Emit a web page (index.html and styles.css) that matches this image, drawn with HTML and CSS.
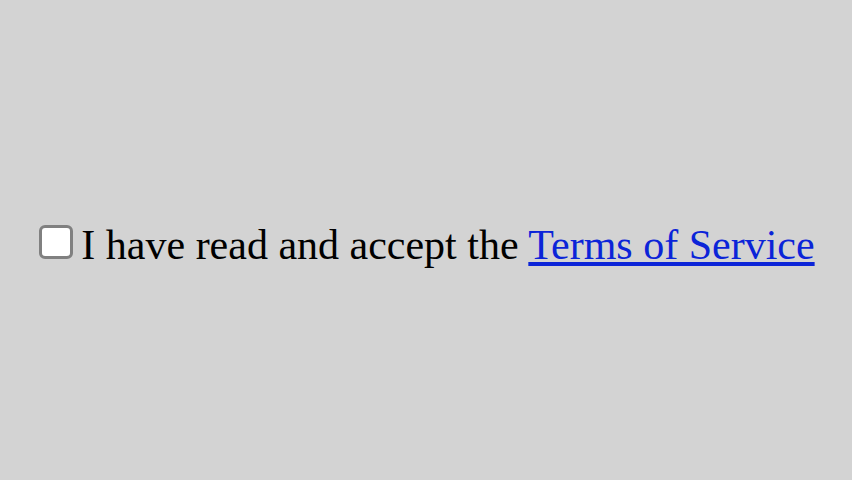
FILE: index.html
```html
<!DOCTYPE html>
<html lang="en">
<head>
    <meta charset="UTF-8">
    <meta name="viewport" content="width=device-width, initial-scale=1.0">
    <title>Terms of Service</title>
    <link rel="stylesheet" href="styles.css">
</head>
<body>
    <form class="consent">
        <input class="consent-box" type="checkbox" id="accept-terms" name="accept-terms">
        <label class="consent-label" for="accept-terms">I have read and accept the <a class="consent-link" href="#terms">Terms of Service</a></label>
    </form>
</body>
</html>
```

FILE: styles.css
```css
body {
    box-sizing: border-box;
    margin: 0;
    padding: 10px 0 0 2px;
    min-height: 100vh;
    display: flex;
    align-items: center;
    justify-content: center;
    background-color: #d3d3d3;
    font-family: "Liberation Serif", "Times New Roman", serif;
    font-size: 42px;
    line-height: 48px;
    color: #000;
}
.consent {
    display: flex;
    align-items: baseline;
    gap: 8px;
}
.consent-box {
    appearance: none;
    box-sizing: border-box;
    flex: none;
    width: 34px;
    height: 34px;
    margin: 0;
    background-color: #fff;
    border: 3px solid #808080;
    border-radius: 6px;
}
.consent-box:checked {
    background-color: #0b24d8;
}
.consent-link {
    color: #0b24d8;
    text-decoration-thickness: 4px;
    text-underline-offset: 3px;
    text-decoration-skip-ink: none;
}
```
